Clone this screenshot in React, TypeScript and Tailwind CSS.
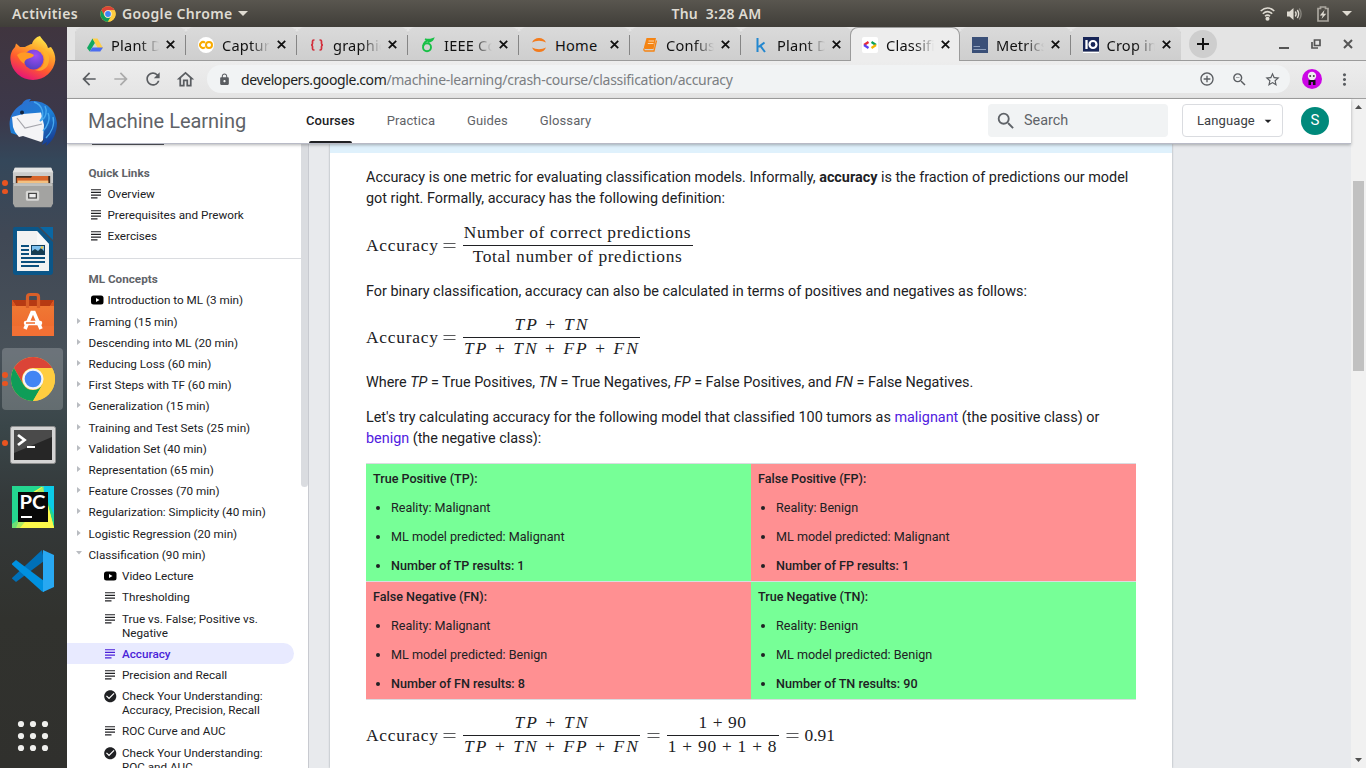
import type { ReactNode } from "react";
import {
  MdAddCircleOutline, MdArrowBack, MdArrowForward, MdArrowDropDown, MdCheckCircle, MdLock, MdMoreVert,
  MdOutlineHome, MdRefresh, MdSearch, MdStarBorder, MdZoomOut,
} from "react-icons/md";

const ubuntu = "font-['Noto_Sans','Open_Sans',sans-serif]";

function ChromeLogo({ size }: { size: number }) {
  return (
    <svg width={size} height={size} viewBox="0 0 48 48">
      <circle cx="24" cy="24" r="23" fill="#ffcd40" />
      <path d="M4.1 12.5A23 23 0 0 1 43.9 12.5H24A11.5 11.5 0 0 0 14 29.7Z" fill="#db4437" />
      <path d="M4.1 12.5 14 29.8A11.5 11.5 0 0 0 34 29.7L24 47A23 23 0 0 1 4.1 12.5Z" fill="#0f9d58" />
      <path d="M43.9 12.5H24A11.5 11.5 0 0 1 34 29.8L24 47A23 23 0 0 0 43.9 12.5Z" fill="#ffcd40" />
      <circle cx="24" cy="24" r="11" fill="#f5f5f5" />
      <circle cx="24" cy="24" r="8.7" fill="#4285f4" />
    </svg>
  );
}

function Firefox() {
  return (
    <svg width="48" height="48" viewBox="0 0 48 48">
      <defs>
        <linearGradient id="fx" x1="0.8" y1="0" x2="0.3" y2="1">
          <stop offset="0" stopColor="#fff44f" /><stop offset="0.35" stopColor="#ffa32b" />
          <stop offset="0.65" stopColor="#ff5a2f" /><stop offset="1" stopColor="#e4107c" />
        </linearGradient>
        <radialGradient id="fxp" cx="0.6" cy="0.3" r="0.8">
          <stop offset="0" stopColor="#a04df5" /><stop offset="1" stopColor="#4b3fbd" />
        </radialGradient>
      </defs>
      <path d="M31 1C34 6 38 8 39 13L42 12C45 16 46.5 20 46.3 25A22.5 22 0 0 1 1.5 25C1 19 3 15 6 12L7 8.500C9 10 10 11 11 12L16 12C18 11 21 9 23 9C24 5 27 2 31 1Z" fill="url(#fx)" />
      <circle cx="24.500" cy="24.500" r="10" fill="url(#fxp)" />
      <path d="M8 20C13 16 20 17 25 20C24 23 20 23 18 24C16 25 15 27 15.500 29C12 27 10 24 8 20Z" fill="#ff9a25" />
      <path d="M24 14C29 11 34 15 35 20C37 28 33 34 26 35C35 38 41 31 40 22C39 15 32 9 24 14Z" fill="#ffb52b" opacity=".75" />
    </svg>
  );
}

function Thunderbird() {
  return (
    <svg width="48" height="48" viewBox="0 0 48 48">
      <defs>
        <linearGradient id="tb" x1="0.2" y1="0" x2="0.8" y2="1">
          <stop offset="0" stopColor="#2d6fd0" /><stop offset="0.5" stopColor="#1c7fd6" /><stop offset="1" stopColor="#173a8f" />
        </linearGradient>
      </defs>
      <path d="M13 5C15 1 18 0 22 0L20 2.500C34 0 46 9 48 24C48 34 44 42 37 47L38 43L33 46L35 40L8 36L2 34C-1 24 0 13 13 5Z" fill="url(#tb)" />
      <path d="M14 15 32 13.500 35 26 34 41 32 43 14 37 10 38 6 33 4 28 3 18Z" fill="#f4f4f6" />
      <path d="M8 19 16 29 33 25" fill="none" stroke="#a6a6ac" strokeWidth="1.200" />
      <path d="M25 3C34 6 36 16 31 22C38 19 38 11 36 7M39 14C42 20 38 28 34 32M44 18C46 26 42 34 37 39" fill="none" stroke="#48a9ee" strokeWidth="1.400" />
      <circle cx="13" cy="13.500" r="2" fill="#10233f" />
    </svg>
  );
}

function Files() {
  return (
    <svg width="42" height="44" viewBox="0 0 44 48" preserveAspectRatio="none">
      <path d="M3 3H41L43 8V20H1V8Z" fill="#cbcbca" />
      <path d="M3 3H41L43 8H1Z" fill="#e4e4e3" />
      <path d="M4 12H40V22H4Z" fill="#3b2b20" />
      <path d="M5 14H20L21 12H38V22H5Z" fill="#d8652a" />
      <path d="M6 17H38V21H6Z" fill="#f2c080" />
      <path d="M1 20H43V42L41 46H3L1 42Z" fill="#a3a3a1" />
      <path d="M2 20H42V23H2Z" fill="#c0c0be" />
      <rect x="14.500" y="28" width="14" height="11" rx="2" fill="#d8d8d6" />
      <rect x="17.500" y="31" width="8" height="5" fill="#eee" stroke="#444" strokeWidth="1.300" />
    </svg>
  );
}

function Writer() {
  return (
    <svg width="42" height="48" viewBox="0 0 42 48">
      <path d="M3 0H26L41 15V45A3 3 0 0 1 38 48H4A3 3 0 0 1 1 45V2A2 2 0 0 1 3 0Z" fill="#0b5688" />
      <path d="M28 0H41V13Z" fill="#0a67a3" />
      <path d="M5 4H25L37 17V44H5Z" fill="#f2f2f2" />
      <path d="M25 4 37 17H25Z" fill="#fff" opacity=".5" />
      <path d="M9 19H17M9 23H17M9 27H17M9 31H33M9 35H33M9 39H27" stroke="#0b4f7d" strokeWidth="2" />
      <rect x="19.500" y="18.500" width="13" height="9" fill="#7ec0ee" stroke="#123f60" />
      <path d="M20 27V24L23 22 26 24 29 21 32 24V27Z" fill="#183c50" /><circle cx="30" cy="20.500" r="1.300" fill="#f4c53d" />
    </svg>
  );
}

function SoftwareBag() {
  return (
    <svg width="42" height="46" viewBox="0 0 42 46">
      <defs><linearGradient id="bag" x1="0" y1="0" x2="0" y2="1"><stop offset="0" stopColor="#ef7b35" /><stop offset="1" stopColor="#f0672c" /></linearGradient></defs>
      <path d="M0 8H42V14H0Z" fill="#b63a13" /><path d="M0 8 4 14H38L42 8V44H0Z" fill="url(#bag)" />
      <path d="M0 8 4 14H0ZM42 8 38 14H42Z" fill="#d9531e" />
      <path d="M15.500 16V5Q15.500 2.500 18 2.500H24Q26.500 2.500 26.500 5V16" fill="none" stroke="#d95f28" strokeWidth="3.200" />
      <path d="M0 34H42V44H0Z" fill="#f37438" opacity=".7" />
      <path d="M13 37 20 20.500H22L29 37" fill="none" stroke="#fff" strokeWidth="3.600" />
      <path d="M14 31H28" stroke="#fff" strokeWidth="4.500" strokeLinecap="round" /><path d="M14 31H23" stroke="#ef6d2d" strokeWidth="1.500" />
    </svg>
  );
}

function Terminal() {
  return (
    <svg className="mt-[3px]" width="46" height="38" viewBox="0 0 46 38">
      <rect x=".5" y=".5" width="45" height="37" rx="2" fill="#d4d4d4" stroke="#8f8f8f" />
      <rect x="4" y="4" width="38" height="30" fill="#262626" /><path d="M4 4H42V11L4 27Z" fill="#4a4a4a" />
      <path d="M8 9 14.500 14 8 19" fill="none" stroke="#fff" strokeWidth="2.800" /><path d="M17 21H25" stroke="#fff" strokeWidth="2" />
    </svg>
  );
}

function PyCharm() {
  return (
    <svg width="42" height="42" viewBox="0 0 42 42">
      <rect width="42" height="42" fill="#24d690" /><path d="M18 8 31 0 42 42H4Z" fill="#fcf84a" />
      <path d="M30 0H42V29L33 9Z" fill="#0bcbe8" /><path d="M0 36 24 6 32 0V12L8 42H0Z" fill="#8ce56a" opacity=".7" />
      <path d="M0 0H28L12 12L6 34L0 38Z" fill="#24d690" />
      <path d="M8 42 36 20 42 42Z" fill="#fcf84a" />
      <rect x="6" y="6" width="30" height="30" fill="#080808" />
      <text x="7.500" y="23" fill="#fff" fontFamily="Lato, sans-serif" fontWeight="700" fontSize="18.500" textLength="26" lengthAdjust="spacingAndGlyphs">PC</text>
      <path d="M9 31H20" stroke="#fff" strokeWidth="2" />
    </svg>
  );
}

function VSCode() {
  return (
    <svg width="42" height="42" viewBox="0 0 42 42">
      <path d="M0 28.500 4 32 32 11 30 0 0 28Z" fill="#0070b8" />
      <path d="M0 13.500 4 10 32 31V42L30 41.500 0 14.500Z" fill="#0091e0" />
      <path d="M31 0 42 5V37L31 42Z" fill="#28a8f2" />
    </svg>
  );
}

function AppsGrid() {
  return (
    <svg width="32" height="32" viewBox="0 0 32 32" fill="#efefed">
      {[4, 16, 28].map((y) => [4, 16, 28].map((x) => <circle key={`${x}-${y}`} cx={x} cy={y} r="3.100" />))}
    </svg>
  );
}

function Slot({ children, dots = 0, active = false }: { children: ReactNode; dots?: number; active?: boolean }) {
  return (
    <div className={`relative flex h-16 w-full shrink-0 items-center justify-center ${active ? "before:absolute before:inset-x-[2px] before:inset-y-[1px] before:right-[3px] before:rounded before:bg-white/20" : ""}`}>
      {dots > 0 && (
        <div className="absolute left-[2px] flex flex-col gap-[3px]">
          {Array.from({ length: dots }, (_, i) => <span key={i} className="size-[5.500px] rounded-full bg-[#e95420]" />)}
        </div>
      )}
      <div className="relative flex">{children}</div>
    </div>
  );
}

function Launcher() {
  return (
    <nav className="flex w-[67px] shrink-0 flex-col bg-[linear-gradient(#40353f_0%,#3c384a_12%,#34475a_18%,#404855_28%,#485159_44%,#3a4649_54%,#34393a_64%,#31322e_80%,#30302d_100%)] pr-px">
      <Slot><Firefox /></Slot>
      <Slot><Thunderbird /></Slot>
      <Slot dots={2}><Files /></Slot>
      <Slot><Writer /></Slot>
      <Slot><SoftwareBag /></Slot>
      <Slot dots={2} active><ChromeLogo size={46} /></Slot>
      <Slot dots={1}><Terminal /></Slot>
      <Slot><PyCharm /></Slot>
      <Slot><VSCode /></Slot>
      <div className="mt-auto"><Slot><AppsGrid /></Slot></div>
    </nav>
  );
}

const icons: Record<string, ReactNode> = {
  drive: <svg width="16" height="16" viewBox="0 0 16 16"><path d="M5.500 1.500 0 11 2.700 14.500 8 5.800Z" fill="#11a861" /><path d="M5.500 1.500H10.500L16 11H10.700Z" fill="#ffcf48" /><path d="M5.300 10.500H16L13.300 14.500H2.700Z" fill="#4b6cf0" /></svg>,
  colab: <svg width="16" height="16" viewBox="0 0 16 16"><circle cx="8" cy="8" r="8" fill="#fff" /><path d="M7 5.700A3 3 0 1 0 7 10.300" fill="none" stroke="#f9ab00" strokeWidth="2" /><circle cx="11" cy="8" r="3" fill="none" stroke="#f9ab00" strokeWidth="2" /></svg>,
  braces: <svg width="16" height="16" viewBox="0 0 16 16" fill="none" stroke="#d22f3c" strokeWidth="1.700"><path d="M5.500 3H4.800Q3.500 3 3.500 4.300V6.500Q3.500 8 2 8Q3.500 8 3.500 9.500V11.700Q3.500 13 4.800 13H5.500M10.500 3H11.200Q12.500 3 12.500 4.300V6.500Q12.500 8 14 8Q12.500 8 12.500 9.500V11.700Q12.500 13 11.200 13H10.500" /></svg>,
  overleaf: <svg width="16" height="16" viewBox="0 0 16 16" fill="none" stroke="#18c046" strokeWidth="1.900"><circle cx="7" cy="10.300" r="4" /><path d="M3.200 9Q4 4.500 8 3.500M5 2Q8 3.500 13 1.800Q12 4 8 5" /></svg>,
  jupyter: <svg width="16" height="16" viewBox="0 0 16 16" fill="#f37b1c"><path d="M1 5.500Q3 1 8 1T15 5.500Q12 3.700 8 3.700T1 5.500ZM1 10.500Q4 12.300 8 12.300T15 10.500Q13 15 8 15T1 10.500Z" /></svg>,
  book: <svg width="16" height="16" viewBox="0 0 16 16"><path d="M4.500 1H14L11.500 12H3Q1.500 12 2 10Z" fill="#f58413" /><path d="M6.500 4H12M5.800 6.500H11.500" stroke="#ffd7a8" /><path d="M2 11.500Q1.500 14 3 14H12L14.500 3.500" fill="none" stroke="#f58413" strokeWidth="1.300" /></svg>,
  kaggle: <svg width="16" height="16" viewBox="0 0 16 16" fill="none" stroke="#2387cf" strokeWidth="2"><path d="M4.500 1V15M11.500 5.500 5.500 10M7.200 8.700 12 15" /></svg>,
  dev: <svg width="16" height="16" viewBox="0 0 16 16"><rect width="16" height="16" rx="2" fill="#fff" /><g fill="none" strokeWidth="2.200"><path d="M6.500 5 2 8" stroke="#ea2b36" /><path d="M2 8 6.500 11" stroke="#5b42f3" /><path d="M9.500 5 14 8" stroke="#0aa35a" /><path d="M14 8 9.500 11" stroke="#f5b400" /></g></svg>,
  tds: <svg width="16" height="16" viewBox="0 0 16 16"><rect width="16" height="16" fill="#3b5078" /><path d="M1.500 9.500H8M1.500 12.500H14" stroke="#8fa0bd" /></svg>,
  io: <svg width="16" height="16" viewBox="0 0 16 16"><rect width="16" height="14.500" fill="#172557" /><path d="M0 15.500H16" stroke="#fff" /><path d="M3.500 3V12" stroke="#fff" strokeWidth="2.300" /><circle cx="10" cy="7.500" r="3.500" fill="none" stroke="#fff" strokeWidth="2.200" /></svg>,
};

function Cross() {
  return <svg className="shrink-0" width="9" height="9" viewBox="0 0 9 9"><path d="M.8.8 8.200 8.200M8.200.8.8 8.200" stroke="#111" strokeWidth="1.800" /></svg>;
}

const tabs = [
  ["drive", "Plant Di"], ["colab", "Captur"], ["braces", "graphic"], ["overleaf", "IEEE Co"], ["jupyter", "Home"],
  ["book", "Confus"], ["kaggle", "Plant Di"], ["dev", "Classifi"], ["tds", "Metrics"], ["io", "Crop in"],
];

function TabStrip() {
  return (
    <div className="flex h-[34px] items-stretch bg-[#e4e4e4] pl-2 shadow-[inset_0_-1px_#9b9b9b]">
      {tabs.map(([icon, label], i) => {
        const active = i === 7;
        const sep = i !== 6 && i !== 7 && i !== 9;
        const width = active ? "w-[110px] -ml-[2px]" : i < 7 ? "w-[111px]" : "w-[110.500px]";
        return (
          <div key={i} className={`relative flex shrink-0 items-center rounded-t-lg pl-3 ${width} ${active ? "border border-b-0 border-[#9b9b9b] bg-[#ededed] pl-[11px]" : "bg-linear-to-b from-[#dadada] to-[#cecece] pt-px shadow-[inset_0_-1px_#9b9b9b]"}`}>
            <span className="flex w-6 shrink-0">{icons[icon]}</span>
            <span className={`w-[49px] shrink-0 overflow-hidden text-[14.600px] leading-[22px] tracking-[0.200px] whitespace-nowrap text-[#111] ${icon === "jupyter" ? "" : "[mask-image:linear-gradient(to_right,#000_58%,transparent_98%)]"}`}>{label}</span>
            <span className="ml-[6px]"><Cross /></span>
            {sep && <span className="absolute right-0 h-5 w-px bg-[#858585]" />}
          </div>
        );
      })}
      <div className="ml-2 flex size-7 items-center justify-center self-center rounded-full bg-[#cecece]">
        <svg width="12" height="12" viewBox="0 0 12 12"><path d="M6 0V12M0 6H12" stroke="#111" strokeWidth="2" /></svg>
      </div>
      <div className="ml-auto flex items-center gap-[22px] pr-[13px] text-[#555]">
        <svg width="10" height="10" viewBox="0 0 10 10"><path d="M0 9H10" stroke="currentColor" strokeWidth="2" /></svg>
        <svg width="10" height="10" viewBox="0 0 10 10" fill="none" stroke="currentColor" strokeWidth="1.700"><path d="M3.500 1H9V6.500H3.500ZM1 3V9H7" /></svg>
        <svg width="10" height="10" viewBox="0 0 10 10"><path d="M1 1 9 9M9 1 1 9" stroke="currentColor" strokeWidth="2" /></svg>
      </div>
    </div>
  );
}

function Toolbar() {
  return (
    <div className="flex h-[38px] items-center border-b border-[#a0a0a0] bg-linear-to-b from-[#ededed] to-[#e4e4e4] pr-[12px] pb-px pl-[12px] text-[#5a5d61]">
      <div className="flex w-[128px] shrink-0 items-center gap-[12px]">
        <MdArrowBack size={20} /><MdArrowForward size={20} className="text-[#aaa]" /><MdRefresh size={20} /><MdOutlineHome size={21} />
      </div>
      <div className="flex h-7 w-[1083px] shrink-0 items-center rounded-full bg-[#f1f3f4] pr-[9px] pl-[11px]">
        <MdLock size={13} />
        <span className="ml-[10px] text-[14px] whitespace-nowrap text-[#7b7e82]"><span className="tracking-[-0.400px] text-[#1d1f22]">developers.google.com</span><span className="tracking-[-0.290px]">/machine-learning/crash-course/classification/accuracy</span></span>
        <div className="ml-auto flex items-center gap-4"><MdAddCircleOutline size={16} /><MdZoomOut size={17} /><MdStarBorder size={17} /></div>
      </div>
      <svg className="ml-[12px] shrink-0" width="20" height="20" viewBox="0 0 20 20"><circle cx="10" cy="10" r="10" fill="#cb05e5" /><circle cx="10" cy="7" r="4.200" fill="#eee" /><circle cx="8.200" cy="7" r="1" fill="#444" /><circle cx="11.800" cy="7" r="1" fill="#444" /><path d="M6.500 16V11H13.500V16H11V13H9V16Z" fill="#150f18" /></svg>
      <MdMoreVert size={19} className="ml-auto shrink-0" />
    </div>
  );
}

function Lines() {
  return <svg width="10" height="10" viewBox="0 0 10 10"><path d="M0 .75H10M0 3.400H10M0 6.100H10M0 8.800H6.500" stroke="currentColor" strokeWidth="1.200" /></svg>;
}
function Video() {
  return <svg width="13" height="10" viewBox="0 0 13 10"><rect y=".5" width="12.500" height="9" rx="2.500" fill="#000" /><path d="M5 3V7L8.500 5Z" fill="#fff" /></svg>;
}

type Kind = "head" | "lines" | "video" | "group" | "open";
function Row({ kind, children }: { kind: Kind; children: ReactNode }) {
  const group = kind === "group" || kind === "open";
  return (
    <div className="flex py-[3.620px] leading-[14px]">
      {group && <span className="flex w-[21.500px] shrink-0 justify-center pt-[3px] pl-[3px] text-[#b9bcc1]">
        {kind === "open" ? <svg width="6" height="4"><path d="M0 0H6L3 3.500Z" fill="currentColor" /></svg> : <svg width="4" height="6"><path d="M0 0V6L3.700 3Z" fill="currentColor" /></svg>}
      </span>}
      {kind === "head" && <span className="w-[21.500px]" />}
      {(kind === "lines" || kind === "video") && <span className="w-[40.500px] shrink-0 pt-[2px] pl-[23.500px]">{kind === "lines" ? <Lines /> : <Video />}</span>}
      <span className={kind === "head" ? "font-bold text-[#5f6368]" : ""}>{children}</span>
    </div>
  );
}

function SubRow({ kind = "lines", active = false, children }: { kind?: "lines" | "video" | "check"; active?: boolean; children: ReactNode }) {
  return (
    <div className={`mr-[7px] flex py-[3.620px] leading-[14px] ${active ? "rounded-r-full bg-[#e8eaff] font-medium text-[#4a1fd8]" : ""}`}>
      <span className={`w-[55px] shrink-0 ${kind === "check" ? "pt-0 pl-[36px]" : kind === "video" ? "pt-[2px] pl-[37px]" : "pt-[2px] pl-[38px]"}`}>
        {kind === "lines" ? <Lines /> : kind === "video" ? <Video /> : <MdCheckCircle size={14.500} />}
      </span>
      <span className="whitespace-nowrap">{children}</span>
    </div>
  );
}

const modules = ["Framing (15 min)", "Descending into ML (20 min)", "Reducing Loss (60 min)", "First Steps with TF (60 min)", "Generalization (15 min)", "Training and Test Sets (25 min)", "Validation Set (40 min)", "Representation (65 min)", "Feature Crosses (70 min)", "Regularization: Simplicity (40 min)", "Logistic Regression (20 min)"];

function Sidebar() {
  return (
    <aside className="flex w-[242px] shrink-0 overflow-hidden border-r border-[#c8cad0] bg-white font-[Roboto,sans-serif] text-[11.700px] text-[#202124]">
      <div className="w-[234px] shrink-0 overflow-hidden">
        <div className="ml-[25px] h-px w-[72px] bg-[#4a4b52]" />
        <div className="mt-[17.150px] border-b border-[#dadce0] pb-[11.100px]">
          <Row kind="head">Quick Links</Row>
          <Row kind="lines">Overview</Row>
          <Row kind="lines">Prerequisites and Prework</Row>
          <Row kind="lines">Exercises</Row>
        </div>
        <div className="pt-[9.350px]">
          <Row kind="head">ML Concepts</Row>
          <Row kind="video">Introduction to ML (3 min)</Row>
          {modules.map((m) => <Row key={m} kind="group">{m}</Row>)}
          <Row kind="open">Classification (90 min)</Row>
          <SubRow kind="video">Video Lecture</SubRow>
          <SubRow>Thresholding</SubRow>
          <SubRow>True vs. False; Positive vs.<br />Negative</SubRow>
          <SubRow active>Accuracy</SubRow>
          <SubRow>Precision and Recall</SubRow>
          <SubRow kind="check">Check Your Understanding:<br />Accuracy, Precision, Recall</SubRow>
          <SubRow>ROC Curve and AUC</SubRow>
          <SubRow kind="check">Check Your Understanding:<br />ROC and AUC</SubRow>
        </div>
      </div>
      <div className="h-[343px] w-[7px] shrink-0 rounded-b bg-[#dadce0]" />
    </aside>
  );
}

function Frac({ num, den, className }: { num: ReactNode; den: ReactNode; className: string }) {
  return (
    <span className={`flex shrink-0 flex-col text-center whitespace-nowrap ${className}`}>
      <span className="h-[23px] border-b border-[#202124] leading-[19px]">{num}</span>
      <span className="h-[23px] leading-[20px]">{den}</span>
    </span>
  );
}
function Eq({ className = "" }: { className?: string }) {
  return <svg className={`shrink-0 ${className}`} width="13" height="6" viewBox="0 0 13 6"><path d="M.5 .5H12.500M.5 4.500H12.500" stroke="#5a5b5d" strokeWidth="1" /></svg>;
}
function Formula({ children }: { children: ReactNode }) {
  return (
    <div className="flex h-[46px] items-center font-['Liberation_Serif',serif] text-[17.400px] leading-[22px]">
      <span className="w-[76.500px] shrink-0 pb-[3px] tracking-[0.750px]">Accuracy</span><Eq className="mr-[7px]" />{children}
    </div>
  );
}
const CountFrac = () => <Frac className="w-[177px]" num={<span className="-mr-[2px] tracking-[2.150px]"><i>TP</i> + <i>TN</i></span>} den={<span className="-mr-[2px] tracking-[2.080px]"><i>TP</i> + <i>TN</i> + <i>FP</i> + <i>FN</i></span>} />;

function Cell({ good, title, reality, predicted, result }: { good: boolean; title: string; reality: string; predicted: string; result: string }) {
  return (
    <div className={`h-[118px] border-b border-[#dadce0] pl-[7px] ${good ? "bg-[#77ff97]" : "bg-[#ff9092]"}`}>
      <p className="font-medium">{title}</p>
      <ul className="list-disc pl-[18px]"><li>Reality: {reality}</li><li>ML model predicted: {predicted}</li><li><span className="font-medium">{result}</span></li></ul>
    </div>
  );
}

function Article() {
  return (
    <main className="ml-[21px] w-[842px] shrink-0 overflow-hidden bg-white font-[Roboto,sans-serif] text-[14.400px] leading-[21px] tracking-[-0.007px] whitespace-nowrap text-[#202124] shadow-[0_0_2px_#9aa0a6]">
      <div className="h-[9px] bg-[#dff1fc]" />
      <div className="px-9 pt-[14px]">
        <p>Accuracy is one metric for evaluating classification models. Informally, <b>accuracy</b> is the fraction of predictions our model<br />got right. Formally, accuracy has the following definition:</p>
        <div className="mt-[14px]"><Formula><Frac className="w-[230px] tracking-[0.600px]" num="Number of correct predictions" den="Total number of predictions" /></Formula></div>
        <p className="mt-[12px]">For binary classification, accuracy can also be calculated in terms of positives and negatives as follows:</p>
        <div className="mt-[13px]"><Formula><CountFrac /></Formula></div>
        <p className="mt-[11px]">Where <i>TP</i> = True Positives, <i>TN</i> = True Negatives, <i>FP</i> = False Positives, and <i>FN</i> = False Negatives.</p>
        <p className="mt-[14px]">Let's try calculating accuracy for the following model that classified 100 tumors as <span className="text-[#5020e0]">malignant</span> (the positive class) or<br /><span className="text-[#5020e0]">benign</span> (the negative class):</p>
        <div className="mt-[14px] grid grid-cols-2 border-t border-[#dadce0] text-[12.600px] leading-[29px]">
          <Cell good title="True Positive (TP):" reality="Malignant" predicted="Malignant" result="Number of TP results: 1" />
          <Cell good={false} title="False Positive (FP):" reality="Benign" predicted="Malignant" result="Number of FP results: 1" />
          <Cell good={false} title="False Negative (FN):" reality="Malignant" predicted="Benign" result="Number of FN results: 8" />
          <Cell good title="True Negative (TN):" reality="Benign" predicted="Benign" result="Number of TN results: 90" />
        </div>
        <div className="mt-[13px]">
          <Formula><CountFrac /><Eq className="mx-[7px]" /><Frac className="w-[112px]" num={<span className="tracking-[0.600px]">1 + 90</span>} den={<span className="tracking-[0.750px]">1 + 90 + 1 + 8</span>} /><Eq className="mr-[6px] ml-[7px]" /><span className="pb-[3px]">0.91</span></Formula>
        </div>
      </div>
    </main>
  );
}

function SiteHeader() {
  const nav = "flex h-full items-center";
  return (
    <header className="relative z-10 flex h-[45px] shrink-0 items-center border-b border-[#b8bac6] bg-white pb-px font-[Roboto,sans-serif] text-[13px] text-[#5f6368] shadow-[0_1px_3px_rgba(60,64,67,.4)]">
      <span className="w-[239px] shrink-0 pl-[21px] text-[20px] tracking-[-0.020px]">Machine Learning</span>
      <nav className="flex h-full gap-8 tracking-[0.100px]">
        <span className={`${nav} relative font-medium text-[#202124] after:absolute after:right-[3px] after:-bottom-px after:left-[3px] after:h-[2px] after:rounded-t after:bg-[#202124]`}>Courses</span>
        <span className={nav}>Practica</span><span className={nav}>Guides</span><span className={nav}>Glossary</span>
      </nav>
      <div className="ml-auto flex h-[33px] w-[180px] items-center gap-[7px] rounded-sm bg-[#f1f3f4] pl-[7px] text-[14.400px]"><MdSearch size={22} />Search</div>
      <div className="ml-[14px] flex h-[33px] w-[101px] items-center rounded border border-[#dadce0] pl-[14px] tracking-[0.100px] text-[#3c4043]">Language<MdArrowDropDown size={16} className="ml-[5px] text-[#202124]" /></div>
      <div className="mr-[22px] ml-[18px] flex size-7 items-center justify-center rounded-full bg-[#00897b] text-[15px] text-white">S</div>
    </header>
  );
}

function TopBar() {
  return (
    <div className="relative flex h-[27px] shrink-0 items-center bg-linear-to-b from-[#59564f] to-[#403e39] text-[14px] font-semibold text-[#dfdbd2]">
      <span className="w-[88px] shrink-0 pl-3 tracking-[0.350px]">Activities</span>
      <span className="ml-[12px] flex items-center gap-[6px]"><ChromeLogo size={16} /><span className="tracking-[0.350px]">Google Chrome</span><svg width="10" height="5"><path d="M0 0H10L5 5Z" fill="currentColor" /></svg></span>
      <span className="absolute inset-x-0 pl-[67px] text-center tracking-[0.250px] whitespace-pre">Thu  3:28 AM</span>
      <div className="ml-auto flex items-center pr-[14px]">
        <svg width="15" height="14" viewBox="0 0 15 14" fill="none" stroke="currentColor" strokeWidth="1.500"><path d="M.7 4Q7.500-2 14.300 4M2.800 6.700Q7.500 2.500 12.200 6.700M5 9.300Q7.500 7 10 9.300" /><circle cx="7.500" cy="11.800" r="1.300" fill="currentColor" /></svg>
        <svg className="ml-[12px]" width="15" height="14" viewBox="0 0 15 14" fill="none" stroke="currentColor" strokeWidth="1.400"><path d="M0 4.500H2.500L6.500 1V13L2.500 9.500H0Z" fill="currentColor" stroke="none" /><path d="M8.300 4.500Q10 7 8.300 9.500M10.300 3Q13 7 10.300 11" /><path d="M12.200 1.500Q16 7 12.200 12.500" opacity=".4" /></svg>
        <svg className="ml-[15px]" width="12" height="16" viewBox="0 0 12 16"><path d="M1 2.500H3.500V1H8.500V2.500H11V15H1Z" fill="none" stroke="#aaa69e" strokeWidth="1.700" /><path d="M7.500 4 2.800 9.500H5.700L4.500 13 9.300 7.700H6.500Z" fill="currentColor" /></svg>
        <svg className="ml-[13px]" width="10" height="5"><path d="M0 0H10L5 5Z" fill="currentColor" /></svg>
      </div>
    </div>
  );
}

export default function App() {
  return (
    <div className={`flex h-[768px] w-[1366px] flex-col overflow-hidden bg-[#30302d] ${ubuntu}`}>
      <TopBar />
      <div className="flex min-h-0 flex-1">
        <Launcher />
        <div className="flex min-w-0 flex-1 flex-col">
          <TabStrip />
          <Toolbar />
          <div className="flex min-h-0 flex-1">
            <div className="flex min-w-0 flex-1 flex-col bg-[#e8eaed]">
              <SiteHeader />
              <div className="flex min-h-0 flex-1"><Sidebar /><Article /></div>
            </div>
            <div className="flex w-[15px] shrink-0 flex-col items-center bg-[#f1f1f1] pt-[6px] pb-[6px]">
              <svg width="7" height="4"><path d="M0 4H7L3.500 0Z" fill="#505050" /></svg>
              <div className="mt-[72px] h-[190px] w-[11px] bg-[#c1c1c1]" />
              <svg className="mt-auto" width="7" height="4"><path d="M0 0H7L3.500 4Z" fill="#505050" /></svg>
            </div>
          </div>
        </div>
      </div>
    </div>
  );
}
